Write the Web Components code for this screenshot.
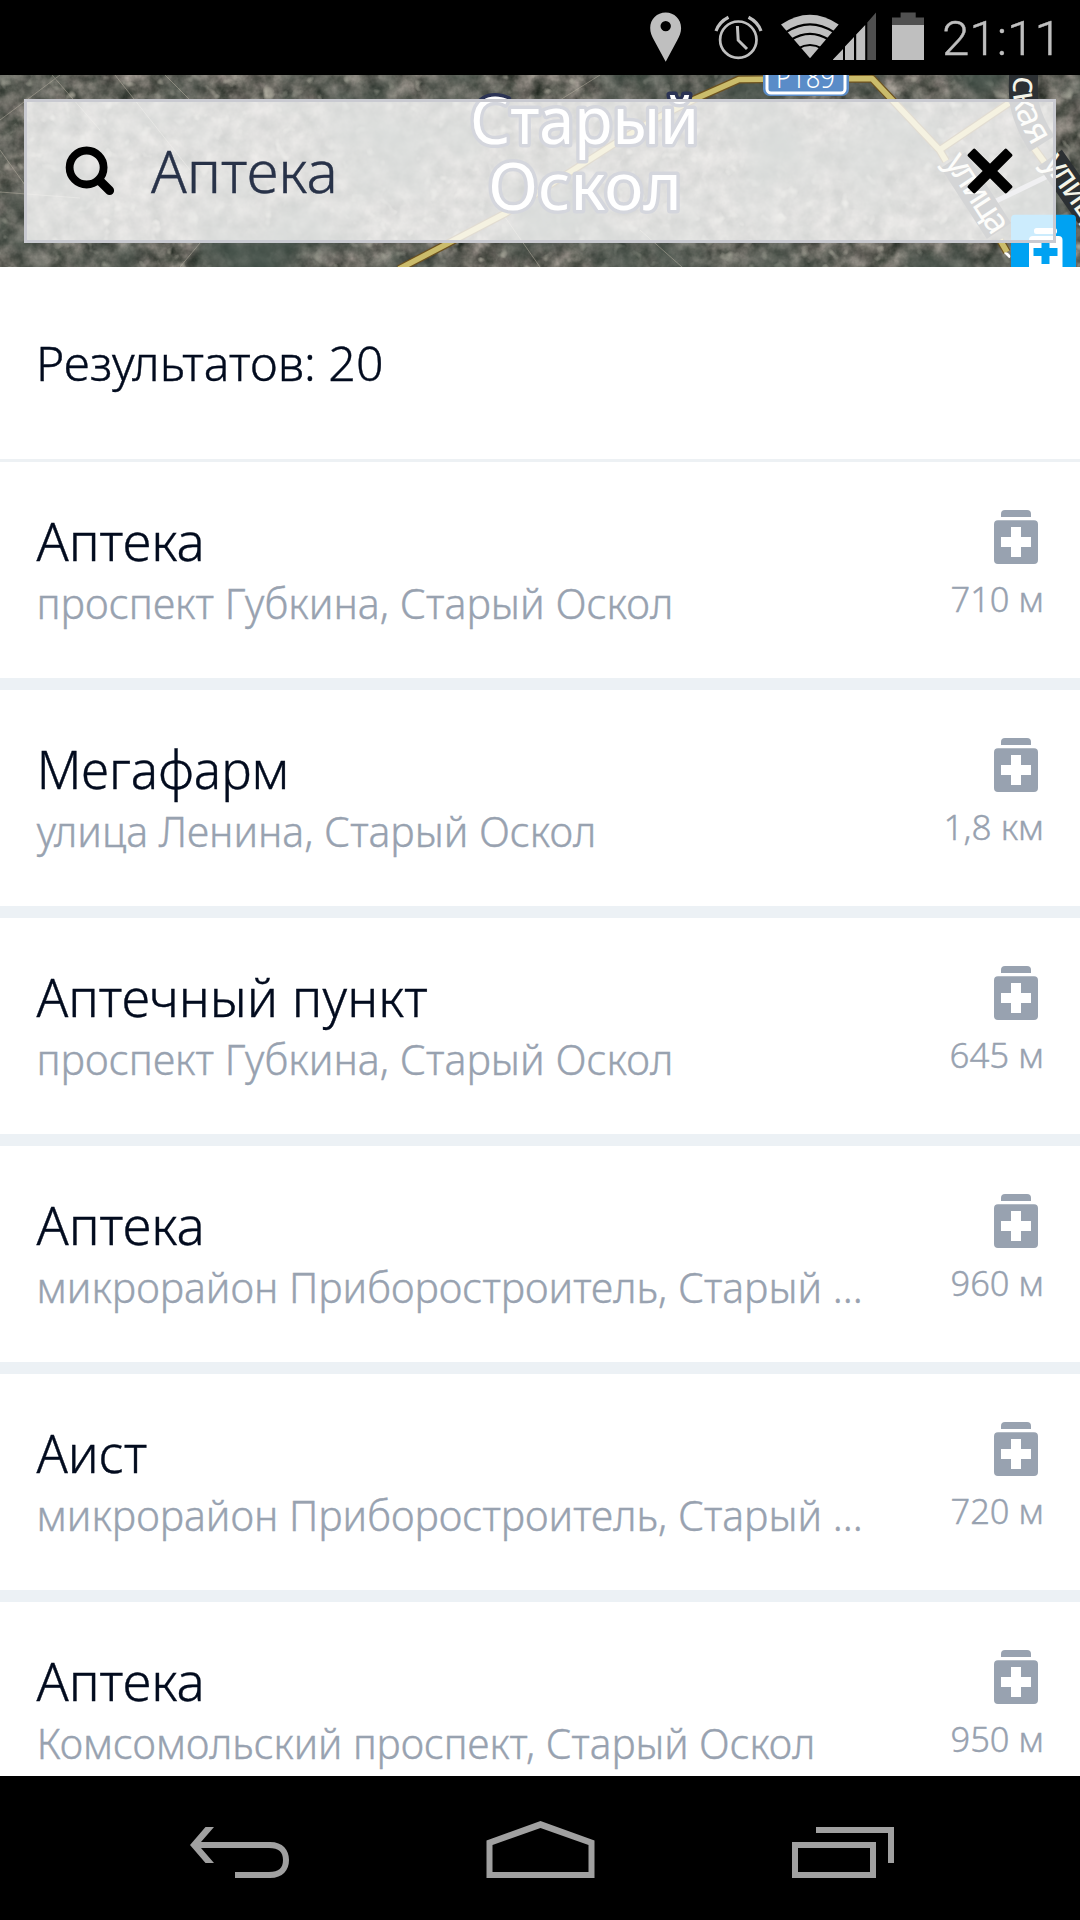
<!DOCTYPE html>
<html lang="ru">
<head>
<meta charset="utf-8">
<title>Аптека</title>
<style>
html, body {
    margin: 0;
    padding: 0;
    background: #000;
}
body {
    width: 1080px;
    height: 1920px;
    overflow: hidden;
    font-family: "Noto Sans", "Open Sans", sans-serif;
    font-weight: 300;
}
</style>
</head>
<body>
<search-app></search-app>

<script>
// one line of text, stretched to [width]; [shift] moves it right
class FitText extends HTMLElement {
    constructor() {
        super();
        this.attachShadow({ mode: "open" });
    }

    connectedCallback() {
        const width = Number(this.getAttribute("width"));
        const shift = Number(this.getAttribute("shift") || 0);
        this.shadowRoot.innerHTML = `
        <style>
        :host {
            display: block;
            white-space: nowrap;
            width: ${width}px;
        }
        span {
            display: inline-block;
            transform-origin: 0 50%;
            -webkit-text-stroke: .4px currentColor;
        }
        </style>
        <span><slot></slot></span>
        `;
        const css = getComputedStyle(this);
        const ctx = document.createElement("canvas").getContext("2d");
        ctx.font = `${css.fontWeight} ${css.fontSize} ${css.fontFamily}`;
        const m = ctx.measureText(this.textContent);
        const ink = m.actualBoundingBoxRight + m.actualBoundingBoxLeft;
        const scale = width / ink;
        this.shadowRoot.querySelector("span").style.transform =
            `translateX(${m.actualBoundingBoxLeft * scale + shift}px) scaleX(${scale})`;
    }
}

class StatusBar extends HTMLElement {
    constructor() {
        super();
        this.attachShadow({ mode: "open" });
    }

    connectedCallback() {
        this.shadowRoot.innerHTML = `
        <style>
        :host {
            display: flex;
            justify-content: flex-end;
            height: 75px;
            background: #000;
            color: #bfbfbf;
            padding-right: 28px;
            box-sizing: border-box;
        }
        svg {
            display: block;
            margin-right: 20px;
        }
        fit-text {
            font: 300 48px/78px Roboto, sans-serif;
        }
        </style>
        <svg width="284" height="75" viewBox="640 0 284 75" fill="#bfbfbf">
            <path fill-rule="evenodd" d="M665.7 12.5c-8.700 0-15.500 6.800-15.500 15.400 0 4.500 1.500 8 4 12.500l11.500 21.400 11.400-21.400c2.500-4.500 4-8 4-12.500 0-8.600-6.800-15.400-15.400-15.400zm0 8.400a5.200 5.200 0 1 1 0 10.400 5.200 5.200 0 0 1 0-10.400z"/>
            <g fill="none" stroke="#bfbfbf">
                <circle cx="738.3" cy="39.700" r="18.200" stroke-width="2.700"/>
                <path stroke-width="3.200" d="M716 31Q719 22 728.500 17.200M761 31Q758 22 748.500 17.200"/>
                <path stroke-width="3" d="M737.400 26L738.200 40.200L747 49"/>
            </g>
            <path d="M810 58.300L781 24.500Q810 5 838.700 24.500Z"/>
            <g fill="none" stroke="#000" stroke-width="2.200">
                <path d="M786 32.200Q810 16.500 834 32.200M791 39.800Q810 28 829 39.800M798 48.500Q810 41.500 822 48.500"/>
            </g>
            <path d="M833 60V59.500L843 49V60ZM845 46.500L854 37V60H845ZM856.200 34.500L865.200 25V60H856.200Z"/>
            <path fill="#505050" d="M867.300 22.500L876 12.500V60H867.300ZM892 17.500H900.600V12.500H915.700V17.500H924V25.300H892Z"/>
            <path d="M892 25H924V60H892Z"/>
        </svg>
        <fit-text width="108">21:11</fit-text>
        `;
    }
}

// satellite map strip behind the search field
class MapStrip extends HTMLElement {
    constructor() {
        super();
        this.attachShadow({ mode: "open" });
    }

    connectedCallback() {
        this.shadowRoot.innerHTML = `
        <style>
        :host {
            display: block;
            position: relative;
            height: 192px;
            overflow: hidden;
            background: #62655d;
        }
        svg {
            position: absolute;
            left: 0;
            top: 0;
        }
        ::slotted(*) {
            position: absolute;
            left: 24px;
            top: 24px;
            right: 24px;
        }
        text {
            font-family: "Noto Sans", sans-serif;
            fill: #fff;
            paint-order: stroke;
            stroke-linejoin: round;
        }
        .city {
            font-size: 65px;
            font-weight: 400;
            stroke: #2b3354;
            stroke-width: 7px;
        }
        .street {
            font-size: 35px;
            font-weight: 400;
            fill: #f4f4e8;
        }
        .halo {
            fill: none;
            stroke: #2c3033;
            stroke-width: 29px;
        }
        </style>
        <svg width="1080" height="192" viewBox="0 75 1080 192">
            <defs>
                <filter id="ground" x="0" y="0" width="100%" height="100%" color-interpolation-filters="sRGB">
                    <feTurbulence type="fractalNoise" baseFrequency="0.06" numOctaves="4" seed="8"/>
                    <feColorMatrix values="0.62 0.12 0 0 0.04  0.55 0.14 0 0 0.06  0.55 0.12 0 0 0.04  0 0 0 0 1"/>
                </filter>
                <filter id="specks" x="0" y="0" width="100%" height="100%" color-interpolation-filters="sRGB">
                    <feTurbulence type="fractalNoise" baseFrequency="0.08" numOctaves="2" seed="3"/>
                    <feColorMatrix values="0 0 0 0 0.68  0 0 0 0 0.67  0 0 0 0 0.62  4 0 0 0 -2.55"/>
                </filter>
                <filter id="patches" x="0" y="0" width="100%" height="100%" color-interpolation-filters="sRGB">
                    <feTurbulence type="fractalNoise" baseFrequency="0.01" numOctaves="3" seed="21"/>
                    <feColorMatrix values="0 0 0 0 0.25  0 0 0 0 0.31  0 0 0 0 0.28  2.2 0 0 0 -0.95"/>
                </filter>
                <path id="street-a" d="M1014 76C1012 96 1012 114 1035 150"/>
            </defs>
            <rect y="75" width="1080" height="192" filter="url(#ground)"/>
            <rect y="75" width="1080" height="192" filter="url(#specks)"/>
            <rect y="75" width="1080" height="192" filter="url(#patches)"/>
            <g fill="none" stroke="#b9b3a4" stroke-width="1" opacity=".5">
                <path d="M115 75L190 170M52 75L100 130M0 192L80 198M0 150L25 185M165 75L192 102M0 120L60 75"/>
                <path d="M180 267L200 243M500 210L540 267M640 230L682 267M560 100L600 75"/>
            </g>
            <g fill="none" stroke-linejoin="round">
                <g stroke="#6d5220" stroke-width="8">
                    <path d="M399 269L506 213L545 188L614 144L655 119L695 99L739 79.500L872 78.500L939.500 150L946 161"/>
                    <path d="M939.500 150L1009 103M1034 148L1045 163M1000 240L1007 252"/>
                </g>
                <g stroke="#cbbc6b" stroke-width="5.500">
                    <path d="M399 269L506 213L545 188L614 144L655 119L695 99L739 79.500L872 78.500L939.500 150L946 161"/>
                    <path d="M939.500 150L1009 103M1034 148L1045 163M1000 240L1007 252"/>
                </g>
                <path stroke="#b4b5bc" stroke-width="5" d="M994 202L1050 175"/>
            </g>
            <text class="city" x="470" y="144" textLength="229" lengthAdjust="spacingAndGlyphs">Старый</text>
            <text class="city" x="488" y="210" textLength="194" lengthAdjust="spacingAndGlyphs">Оскол</text>
            <rect x="763" y="40" width="86" height="56" rx="7" fill="#5a8cc8"/>
            <rect x="767" y="44" width="78" height="49" rx="4" fill="none" stroke="#fff" stroke-width="3"/>
            <text x="776" y="88" font-size="30" textLength="59" lengthAdjust="spacingAndGlyphs">Р189</text>
            <path class="halo" d="M1024 70C1022 96 1022 112 1042 144M953 160L999 231M1050 158L1090 215"/>
            <text class="street"><textPath href="#street-a">ская</textPath></text>
            <text class="street" transform="translate(944 162) rotate(57)" textLength="89">улица</text>
            <text class="street" transform="translate(1042 163) rotate(55)" textLength="92">улица</text>
            <path fill="#fff" d="M1004 253q3-2 6 2q1 3-1 3q-2-2-5-5z"/>
            <rect x="1011" y="214.700" width="65" height="70" rx="4" fill="#00a2f2"/>
            <rect x="1034" y="228" width="23" height="6" rx="2.500" fill="#fff"/>
            <rect x="1029" y="236" width="33.500" height="40" rx="4" fill="#fff"/>
            <path fill="#00a2f2" d="M1041.500 240h8v8h8v8h-8v8h-8v-8h-8v-8h8z"/>
        </svg>
        <slot></slot>
        `;
    }
}

class SearchField extends HTMLElement {
    constructor() {
        super();
        this.attachShadow({ mode: "open" });
    }

    connectedCallback() {
        this.shadowRoot.innerHTML = `
        <style>
        :host {
            display: flex;
            align-items: center;
            box-sizing: border-box;
            height: 144px;
            border: 3px solid #c9cad1;
            background: rgba(255, 255, 255, .8);
            background-clip: padding-box;
            color: #283248;
            padding: 0 40px 0 38px;
        }
        ::slotted(fit-text) {
            font-size: 58.500px;
            line-height: 80px;
            margin: -3px auto 0 36px;
        }
        </style>
        <svg width="50" height="50" viewBox="65 146 50 50" fill="none" stroke="#000">
            <circle cx="86.600" cy="167.500" r="17" stroke-width="7.800"/>
            <path stroke-width="9" stroke-linecap="round" d="M100 181L109.600 190.500"/>
        </svg>
        <slot></slot>
        <svg width="46" height="46" viewBox="0 0 46 46">
            <g transform="rotate(45 23 23)">
                <rect x="-4.500" y="17.800" width="55" height="10.400" rx="1.800"/>
                <rect x="17.800" y="-4.500" width="10.400" height="55" rx="1.800"/>
            </g>
        </svg>
        `;
    }
}

class ResultRow extends HTMLElement {
    constructor() {
        super();
        this.attachShadow({ mode: "open" });
    }

    connectedCallback() {
        const { name, address, distance } = this.data;
        this.shadowRoot.innerHTML = `
        <style>
        :host {
            display: flex;
            flex: none;
            justify-content: space-between;
            box-sizing: border-box;
            height: 228px;
            padding: 48px 38px 0 36px;
            background: #fff;
            border-bottom: 12px solid #ecf1f5;
        }
        .name {
            font-size: 52.800px;
            line-height: 62px;
            color: #020b1e;
        }
        .address {
            font-size: 42px;
            line-height: 61px;
            color: #98a2b0;
        }
        .side {
            display: flex;
            flex-direction: column;
            align-items: flex-end;
            color: #98a2b0;
        }
        .side svg {
            margin: 0 4px 11px 0;
        }
        .side fit-text {
            font-size: 34.500px;
            line-height: 48px;
        }
        </style>
        <div>
            <fit-text class="name" width="${name[1]}" shift="${name[2]}">${name[0]}</fit-text>
            <fit-text class="address" width="${address[1]}" shift="${address[2]}">${address[0]}</fit-text>
        </div>
        <div class="side">
            <svg width="44" height="54" viewBox="0 0 44 54" fill="#98a2b0">
                <path d="M7 7V4q0-4 4-4h22q4 0 4 4v3z"/>
                <path fill-rule="evenodd" d="M4 10.300H40q4 0 4 4V50q0 4-4 4H4q-4 0-4-4V14.300q0-4 4-4zM17 17V27H7V37H17V47H27V37H37V27H27V17z"/>
            </svg>
            <fit-text width="${distance[1]}" shift="-0.5">${distance[0]}</fit-text>
        </div>
        `;
    }
}

class NavBar extends HTMLElement {
    constructor() {
        super();
        this.attachShadow({ mode: "open" });
    }

    connectedCallback() {
        this.shadowRoot.innerHTML = `
        <style>
        :host {
            display: flex;
            justify-content: space-between;
            align-items: flex-start;
            box-sizing: border-box;
            height: 144px;
            padding: 40px 186px 0 189px;
            background: #000;
        }
        </style>
        <svg width="101" height="64" viewBox="189 1816 101 64" fill="#a0a0a0">
            <path d="M190 1845L205.500 1827H214L201 1842H270C283 1842 289 1850 289 1860S283 1878 270 1878H235V1872H269C279 1872 283 1868 283 1860S279 1848 269 1848H201L214 1863H205.500Z"/>
        </svg>
        <svg width="110" height="64" viewBox="485 1816 110 64" fill="#a0a0a0">
            <path fill-rule="evenodd" d="M539.500 1821L593.500 1840.500V1878H485.500V1840.500ZM539.500 1828L491.500 1845V1872H587.500V1845Z"/>
        </svg>
        <svg width="103" height="64" viewBox="791 1816 103 64" fill="#a0a0a0">
            <path fill-rule="evenodd" d="M792 1842H876V1878H792ZM798 1848V1872H870V1848Z"/>
            <path d="M816 1827H894V1863H888V1833H816Z"/>
        </svg>
        `;
    }
}

class SearchApp extends HTMLElement {
    // [text, width, shift]
    results = [
        { name: ["Аптека", 164, 0.5], address: ["проспект Губкина, Старый Оскол", 631, 3.5], distance: ["710 м", 90] },
        { name: ["Мегафарм", 244, 5.5], address: ["улица Ленина, Старый Оскол", 557, 0.5], distance: ["1,8 км", 95] },
        { name: ["Аптечный пункт", 390.5, 0.5], address: ["проспект Губкина, Старый Оскол", 631, 3.5], distance: ["645 м", 90] },
        { name: ["Аптека", 164, 0.5], address: ["микрорайон Приборостроитель, Старый ...", 821, 3.5], distance: ["960 м", 90] },
        { name: ["Аист", 110, 0.5], address: ["микрорайон Приборостроитель, Старый ...", 821, 3.5], distance: ["720 м", 90] },
        { name: ["Аптека", 164, 0.5], address: ["Комсомольский проспект, Старый Оскол", 772, 4.5], distance: ["950 м", 90] }
    ];

    constructor() {
        super();
        this.attachShadow({ mode: "open" });
    }

    connectedCallback() {
        this.shadowRoot.innerHTML = `
        <style>
        :host {
            display: flex;
            flex-direction: column;
            width: 1080px;
            height: 1920px;
        }
        status-bar, map-strip, nav-bar {
            flex: none;
        }
        #list {
            flex: 1;
            min-height: 0;
            overflow: hidden;
            display: flex;
            flex-direction: column;
            background: #fff;
        }
        header {
            flex: none;
            box-sizing: border-box;
            height: 195px;
            padding: 61px 0 0 39px;
            border-bottom: 3px solid #edf1f4;
            font-size: 48px;
            line-height: 70px;
            color: #020b1e;
        }
        </style>
        <status-bar></status-bar>
        <map-strip>
            <search-field><fit-text width="182.5">Аптека</fit-text></search-field>
        </map-strip>
        <div id="list">
            <header><fit-text width="341" shift="1">Результатов: 20</fit-text></header>
        </div>
        <nav-bar></nav-bar>
        `;
        const list = this.shadowRoot.querySelector("#list");
        this.results.forEach(result => {
            const row = document.createElement("result-row");
            row.data = result;
            list.appendChild(row);
        });
    }
}

customElements.define("fit-text", FitText);
customElements.define("status-bar", StatusBar);
customElements.define("map-strip", MapStrip);
customElements.define("search-field", SearchField);
customElements.define("result-row", ResultRow);
customElements.define("nav-bar", NavBar);
customElements.define("search-app", SearchApp);
</script>
</body>
</html>
